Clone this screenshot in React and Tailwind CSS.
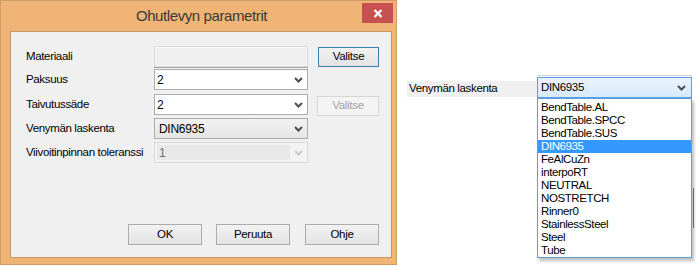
import React from "react";

const Chevron = ({ color = "#4d4d4d" }) => (
  <svg width="9" height="6" viewBox="0 0 9 6">
    <path d="M1 1 L4.5 4.5 L8 1" fill="none" stroke={color} strokeWidth="2" />
  </svg>
);

const Label = ({ children }) => (
  <div className="w-[128px] shrink-0 text-[11.5px] tracking-[-0.35px] text-black leading-none">{children}</div>
);

const Btn = ({ children, def, disabled, className = "" }) => (
  <div
    className={
      "flex items-center justify-center text-[11.5px] tracking-[-0.3px] leading-none border " +
      (disabled
        ? "border-[#d5d5d5] bg-[#f4f4f4] text-[#a3a3a3] "
        : def
        ? "border-[#3c7fb1] bg-gradient-to-b from-[#f2f2f2] to-[#e3e3e3] text-black "
        : "border-[#acacac] bg-gradient-to-b from-[#f2f2f2] to-[#e3e3e3] text-black ") +
      className
    }
  >
    {children}
  </div>
);

const items = [
  "BendTable.AL",
  "BendTable.SPCC",
  "BendTable.SUS",
  "DIN6935",
  "FeAlCuZn",
  "interpoRT",
  "NEUTRAL",
  "NOSTRETCH",
  "Rinner0",
  "StainlessSteel",
  "Steel",
  "Tube",
];

export default function App() {
  return (
    <div className="relative w-[696px] h-[267px] bg-white flex font-['Liberation_Sans',Arial,sans-serif]">
      {/* Dialog */}
      <div className="w-[397px] h-[265px] shrink-0 bg-[#efb476] border border-[#d19c62] flex flex-col">
        <div className="relative h-[30px] flex items-center justify-center pl-[6px]">
          <span className="text-[15px] tracking-[-0.4px] text-[#3a3a3a]">Ohutlevyn parametrit</span>
          <div className="absolute right-[3px] top-[2px] w-[31px] h-[20px] bg-[#c75050] flex items-center justify-center">
            <svg width="10" height="9" viewBox="0 0 10 9">
              <path d="M1.5 1 L8.5 8 M8.5 1 L1.5 8" stroke="white" strokeWidth="2.2" />
            </svg>
          </div>
        </div>
        <div className="ml-[9px] mr-[4px] h-[227px] border border-[#c8955e] bg-[#f0f0f0] flex flex-col pl-[15px] pt-[14px]">
          {/* Materiaali */}
          <div className="flex items-center h-[21px]">
            <Label>Materiaali</Label>
            <div className="w-[154px] h-[21px] border border-[#d9d9d9] bg-[#efefef] shadow-[inset_0_0_0_1px_#f8f8f8]" />
            <Btn def className="ml-[10px] w-[61px] h-[20px]">Valitse</Btn>
          </div>
          <div className="ml-[128px] w-[154px] h-px bg-[#a7a7a7]" />
          {/* Paksuus */}
          <div className="flex items-center h-[21px] mt-[1px]">
            <Label>Paksuus</Label>
            <div className="w-[154px] h-[21px] border border-[#acacac] bg-white flex items-center justify-between pl-[2px] pr-[4px] text-[12px] text-black">
              <span>2</span>
              <Chevron />
            </div>
          </div>
          {/* Taivutussäde */}
          <div className="flex items-center h-[21px] mt-[4px]">
            <Label>Taivutussäde</Label>
            <div className="w-[154px] h-[21px] border border-[#acacac] bg-white flex items-center justify-between pl-[2px] pr-[4px] text-[12px] text-black">
              <span>2</span>
              <Chevron />
            </div>
            <Btn disabled className="ml-[9px] w-[62px] h-[20px] mt-[2px]">Valitse</Btn>
          </div>
          {/* Venymän laskenta */}
          <div className="flex items-center h-[21px] mt-[3px]">
            <Label>Venymän laskenta</Label>
            <div className="w-[154px] h-[21px] border border-[#acacac] bg-gradient-to-b from-[#f2f2f2] to-[#e5e5e5] flex items-center justify-between pl-[4px] pr-[4px] text-[12px] tracking-[-0.3px] text-black">
              <span>DIN6935</span>
              <Chevron />
            </div>
          </div>
          {/* Viivoitinpinnan toleranssi */}
          <div className="flex items-center h-[21px] mt-[3px]">
            <Label>Viivoitinpinnan toleranssi</Label>
            <div className="w-[154px] h-[21px] border border-[#d9d9d9] bg-[#f3f3f3] flex items-center justify-between pl-[2px] pr-[4px]">
              <div className="w-[133px] h-[15px] bg-[#e8e8e8] flex items-center pl-[2px] text-[12px] text-[#6d6d6d]">1</div>
              <Chevron color="#c8c8c8" />
            </div>
          </div>
          {/* Buttons */}
          <div className="flex justify-end pr-[12px] mt-[61px]">
            <Btn className="w-[74px] h-[21px]">OK</Btn>
            <Btn className="w-[74px] h-[21px] ml-[14px]">Peruuta</Btn>
            <Btn className="w-[74px] h-[21px] ml-[15px]">Ohje</Btn>
          </div>
        </div>
      </div>

      {/* Right part */}
      <div className="ml-[10px] pt-[75px] flex">
        <div className="w-[130px] mt-[6px] h-[16px] bg-[#f0f0f0] flex items-center pl-[2px] text-[11.5px] tracking-[-0.35px] text-black">
          Venymän laskenta
        </div>
        <div className="w-[155px] flex flex-col">
          <div className="h-px bg-[#d4d4d4]" />
          <div className="mt-[1px] h-[21px] border border-[#5c9fe0] bg-gradient-to-b from-[#eaf4fd] to-[#d7eafb] flex items-center justify-between pl-[3px] pr-[5px] text-[11.5px] tracking-[-0.35px] text-black">
            <span>DIN6935</span>
            <Chevron />
          </div>
          <div className="h-[160px] border border-[#5c9fe0] bg-white pt-[2px] shadow-[2px_3px_3px_rgba(0,0,0,0.25)]">
            {items.map((it) => (
              <div
                key={it}
                className={
                  "h-[13px] leading-[13px] pl-[3px] text-[11.5px] tracking-[-0.4px] " +
                  (it === "DIN6935" ? "bg-[#3399ff] text-white" : "text-black")
                }
              >
                {it}
              </div>
            ))}
          </div>
        </div>
      </div>
      <div className="absolute left-[693px] top-[188px] w-px h-[40px] bg-[#7d6147]" />
    </div>
  );
}
